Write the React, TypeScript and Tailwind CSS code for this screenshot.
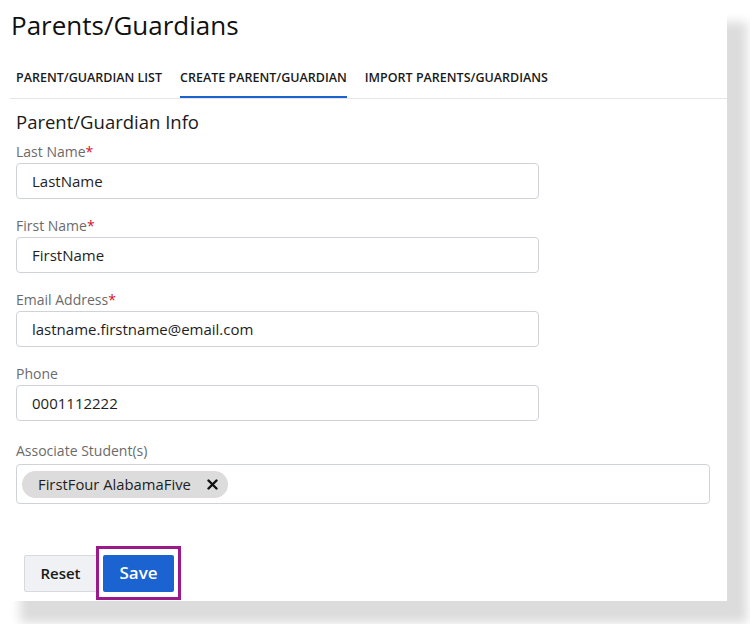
const FIELDS = [
  { label: 'Last Name', required: true, value: 'LastName' },
  { label: 'First Name', required: true, value: 'FirstName' },
  { label: 'Email Address', required: true, value: 'lastname.firstname@email.com' },
  { label: 'Phone', required: false, value: '0001112222' },
];

const TABS = ['PARENT/GUARDIAN LIST', 'CREATE PARENT/GUARDIAN', 'IMPORT PARENTS/GUARDIANS'];

function Field({ label, required, value }: { label: string; required: boolean; value: string }) {
  return (
    <div className="flex flex-col">
      <div className="h-[18px] text-[14px] leading-[18px] text-[#6b6b6b]">
        {label}
        {required && <span className="text-[#d0102a]">*</span>}
      </div>
      <div className="mt-[2px] flex h-[36px] w-[523px] items-center rounded-[4px] border border-[#cfd3d8] px-[15px] text-[15px] text-[#1e1e1e]">
        {value}
      </div>
    </div>
  );
}

export default function App() {
  return (
    <div className="h-[624px] w-[750px] overflow-hidden bg-white font-['Open_Sans',sans-serif]">
      <div className="flex h-[601px] w-[727px] flex-col bg-white pl-[10px] shadow-[20px_22px_10px_#dcdcdc]">
        <h1 className="pt-[8px] pl-[1px] text-[26px] leading-[34px] text-[#111]">Parents/Guardians</h1>

        <div className="mt-[27px] flex gap-[18px] border-b border-[#e3e5e8] pl-[6px]">
          {TABS.map((t, i) => (
            <div
              key={t}
              className={
                'pb-[9px] text-[12.5px] font-semibold leading-[18px] text-[#1a1a1a] ' +
                (i === 1 ? 'border-b-2 border-[#1c62cc]' : 'border-b-2 border-transparent')
              }
            >
              {t}
            </div>
          ))}
        </div>

        <div className="flex flex-col pl-[6px]">
          <h2 className="mt-[11px] text-[18.5px] font-medium leading-[24px] text-[#1a1a1a]">Parent/Guardian Info</h2>
          <div className="mt-[9px] flex flex-col gap-[18px]">
            {FIELDS.map((f) => (
              <Field key={f.label} {...f} />
            ))}
            <div className="mt-[3px] flex flex-col">
              <div className="h-[18px] text-[14px] leading-[18px] text-[#6b6b6b]">Associate Student(s)</div>
              <div className="mt-[4px] flex h-[40px] w-[694px] items-center rounded-[4px] border border-[#cfd3d8] px-[5px]">
                <div className="flex h-[27px] items-center gap-[16px] rounded-full bg-[#dcdcdc] pl-[16px] pr-[10px] text-[14.8px] text-[#1e1e1e]">
                  <span>FirstFour AlabamaFive</span>
                  <svg width="11" height="11" viewBox="0 0 11 11">
                    <path d="M1.5 1.5 L9.5 9.5 M9.5 1.5 L1.5 9.5" stroke="#111" strokeWidth="2.4" strokeLinecap="round" />
                  </svg>
                </div>
              </div>
            </div>
          </div>

          <div className="mt-[42px] flex items-center pl-[8px]">
            <button className="h-[37px] w-[73px] rounded-[2px] border border-[#d6d9de] bg-[#f0f1f4] text-[15px] font-semibold text-[#1a1a1a]">
              Reset
            </button>
            <div className="ml-[-1px] flex h-[54px] w-[85px] items-center justify-center border-[3px] border-[#9a1a8c]">
              <button className="h-[37px] w-[71px] rounded-[2px] bg-[#1b63d0] text-[17px] font-semibold text-white">
                Save
              </button>
            </div>
          </div>
        </div>
      </div>
    </div>
  );
}
